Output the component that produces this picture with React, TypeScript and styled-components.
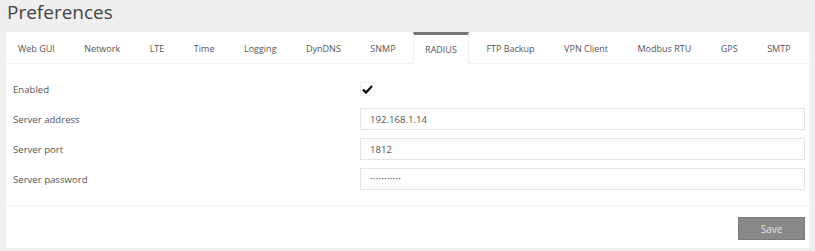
import React from "react";
import styled, { createGlobalStyle } from "styled-components";

const GlobalStyle = createGlobalStyle`
  html, body {
    margin: 0;
    padding: 0;
    background: #efefef;
    font-family: "Open Sans", "Noto Sans", sans-serif;
    color: #555;
  }
`;

const Page = styled.div`
  width: 815px;
  height: 251px;
  padding: 0 5px 0 6px;
  box-sizing: border-box;
`;

const Title = styled.h1`
  margin: 0;
  padding: 0 0 0 1px;
  height: 32px;
  font-size: 19px;
  font-weight: 400;
  line-height: 25px;
  color: #444;
`;

const Panel = styled.div`
  background: #fff;
  height: 216px;
  display: flex;
  flex-direction: column;
`;

const TabBar = styled.div`
  display: flex;
  gap: 5.5px;
  height: 32px;
  background: #fff;
  border-bottom: 1px solid #f0f0f0;
  box-sizing: border-box;
`;

const Tab = styled.div<{ active?: boolean }>`
  flex-shrink: 0;
  white-space: nowrap;
  padding: 0 11px 1px;
  display: flex;
  align-items: center;
  font-size: 9px;
  color: #555;
  box-sizing: border-box;
  border-top: 3px solid ${(p) => (p.active ? "#777" : "transparent")};
  border-left: 1px solid ${(p) => (p.active ? "#f0f0f0" : "transparent")};
  border-right: 1px solid ${(p) => (p.active ? "#f0f0f0" : "transparent")};
  margin-bottom: ${(p) => (p.active ? "-1px" : "0")};
  background: #fff;
`;

const Form = styled.div`
  display: flex;
  flex-direction: column;
  padding: 14px 5px 0 7px;
  gap: 8px;
  height: 142px;
  border-bottom: 1px solid #f2f2f2;
  box-sizing: border-box;
`;

const Row = styled.div`
  display: grid;
  grid-template-columns: 347px 1fr;
  align-items: center;
  height: 22px;
`;

const Label = styled.label`
  font-size: 9.6px;
  color: #555;
  white-space: nowrap;
`;

const Input = styled.input`
  height: 22px;
  box-sizing: border-box;
  border: 1px solid #e3e3e3;
  padding: 0 9px;
  font-family: inherit;
  font-size: 9.6px;
  color: #555;
  outline: none;

  &[type="password"] {
    font-size: 6px;
    letter-spacing: 0.6px;
  }
`;

const CheckBox = styled.span`
  width: 13px;
  height: 12px;
  border: 1px solid #eee;
  display: flex;
  align-items: center;
  justify-content: center;
`;

const Footer = styled.div`
  display: flex;
  justify-content: flex-end;
  padding: 11px 5px 0 0;
`;

const SaveButton = styled.button`
  width: 67px;
  height: 23px;
  background: #888;
  border: 1px solid #7a7a7a;
  color: #e4e4e4;
  font-family: inherit;
  font-size: 10px;
  cursor: pointer;
`;

const tabs = [
  "Web GUI",
  "Network",
  "LTE",
  "Time",
  "Logging",
  "DynDNS",
  "SNMP",
  "RADIUS",
  "FTP Backup",
  "VPN Client",
  "Modbus RTU",
  "GPS",
  "SMTP",
];

export default function App() {
  return (
    <>
      <GlobalStyle />
      <Page>
        <Title>Preferences</Title>
        <Panel>
          <TabBar>
            {tabs.map((t) => (
              <Tab key={t} active={t === "RADIUS"}>
                {t}
              </Tab>
            ))}
          </TabBar>
          <Form>
            <Row>
              <Label>Enabled</Label>
              <CheckBox>
                <svg width="11" height="9" viewBox="0 0 11 9">
                  <path d="M1 4.5 L4 7.5 L10 1" stroke="#111" strokeWidth="2.4" fill="none" />
                </svg>
              </CheckBox>
            </Row>
            <Row>
              <Label>Server address</Label>
              <Input defaultValue="192.168.1.14" />
            </Row>
            <Row>
              <Label>Server port</Label>
              <Input defaultValue="1812" />
            </Row>
            <Row>
              <Label>Server password</Label>
              <Input type="password" defaultValue="secretpass1" />
            </Row>
          </Form>
          <Footer>
            <SaveButton>Save</SaveButton>
          </Footer>
        </Panel>
      </Page>
    </>
  );
}
